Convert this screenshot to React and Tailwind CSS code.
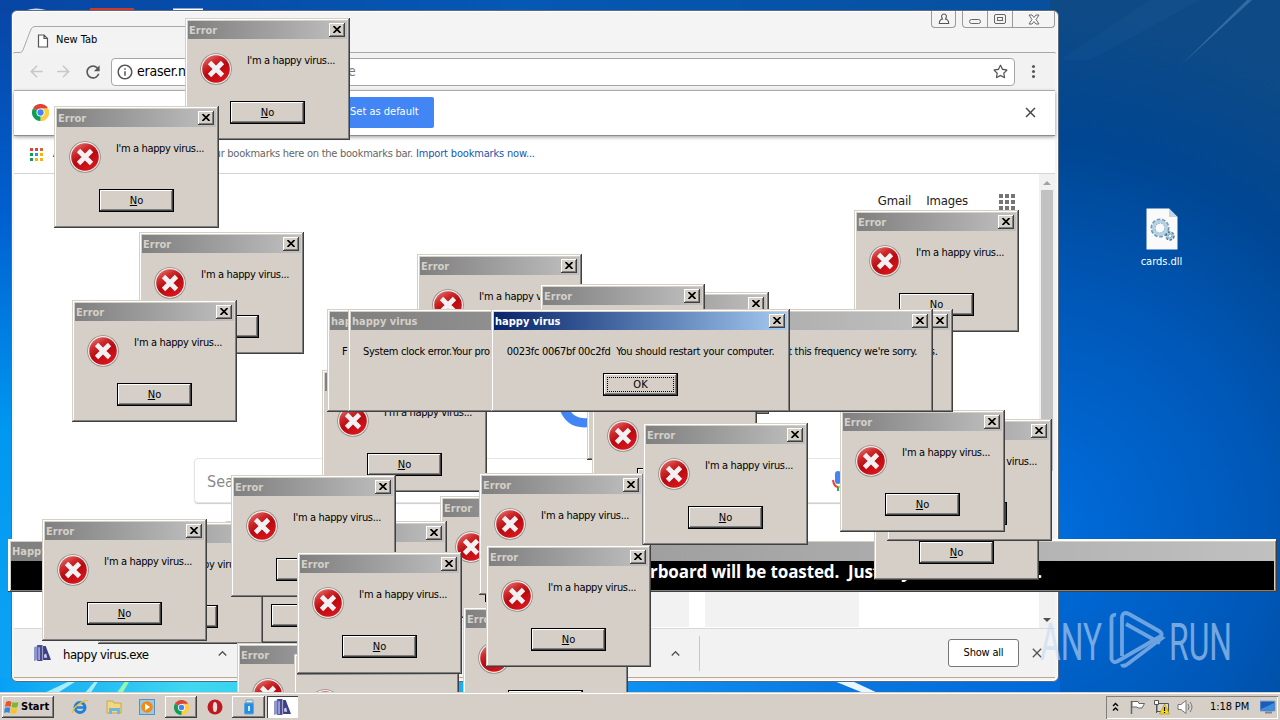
import { FaRegStar } from 'react-icons/fa'
import { MdArrowBack, MdArrowForward, MdClose, MdInfoOutline, MdRefresh, MdExpandLess } from 'react-icons/md'

// back to front; the letters are the texts left uncovered: t = title, m = message, b = button
const errors = [
	[854, 210, 'tmb'], [185, 18, 'tmb'], [54, 106, 'tmb'], [139, 232, 'tm'], [72, 300, 'tmb'],
	[604, 292, ''], [417, 254, 'tm'], [540, 284, 't'], [587, 338, ''], [592, 385, 'm'], [322, 370, 'mb'],
	[440, 496, 't'], [282, 521, ''], [226, 521, ''], [98, 522, 'm'], [237, 643, 't'], [294, 654, 'm'],
	[463, 607, 't'], [479, 473, 'tm'], [231, 475, 'tm'], [297, 552, 'tmb'], [486, 545, 'tmb'], [42, 519, 'tmb'],
	[643, 423, 'tmb'], [874, 458, 'b'], [887, 419, 'm'], [840, 410, 'tmb'],
]

const ErrorIcon = () => (
	<svg width="32" height="32" viewBox="0 0 32 32" className="shrink-0">
		<defs>
			<linearGradient id="err" x1="0" y1="0" x2="0.6" y2="1">
				<stop offset="0" stopColor="#e88a86" />
				<stop offset="0.35" stopColor="#cf2a2c" />
				<stop offset="0.6" stopColor="#b80a10" />
				<stop offset="1" stopColor="#d8161c" />
			</linearGradient>
		</defs>
		<circle cx="16" cy="16" r="15.8" fill="#8f8a86" />
		<circle cx="16" cy="16" r="15" fill="#f1efec" />
		<circle cx="16" cy="16" r="13.8" fill="url(#err)" />
		<path d="M9.500 9.500 22.500 22.500M22.500 9.500 9.500 22.500" stroke="#f1f1f3" strokeWidth="4.800" />
	</svg>
)

const CloseButton = () => (
	<div className="flex h-3.5 w-4 items-center justify-center bg-[#d4d0c8] shadow-[inset_-1px_-1px_#404040,inset_1px_1px_#fff,inset_-2px_-2px_#808080]">
		<svg width="8" height="7" viewBox="0 0 8 7" className="mr-px mb-px">
			<path d="M0.5 0 7.5 7M7.5 0 0.5 7" stroke="#000" strokeWidth="1.7" />
		</svg>
	</div>
)

const Window = ({ x, y, w, h, title, active, children }) => (
	<div
		className="absolute flex flex-col bg-[#d5cfc8] p-[3px] shadow-[inset_-1px_-1px_#404040,inset_1px_1px_#d4d0c8,inset_-2px_-2px_#808080,inset_2px_2px_#fff]"
		style={{ left: x, top: y, width: w, height: h }}
	>
		<div className={`flex h-[18px] shrink-0 items-center bg-linear-to-r pr-0.5 pl-px text-[11px] font-bold whitespace-nowrap ${active ? 'from-[#0a246a] to-[#a6caf0] text-white' : 'from-[#808080] to-[#c0c0c0] text-[#d4d0c8]'}`}>
			<span className="mt-0.5 mr-auto leading-4">{title}</span>
			<CloseButton />
		</div>
		{children}
	</div>
)

const DialogButton = ({ focused, children }) => (
	<div className="flex h-[23px] w-[75px] items-center justify-center border border-black bg-[#d5cfc8] text-[11px] shadow-[inset_-1px_-1px_#404040,inset_1px_1px_#fff,inset_-2px_-2px_#808080]">
		<div className={`flex h-[15px] w-[67px] items-center justify-center leading-[13px] ${focused ? 'border border-dotted border-black' : ''}`}>{children}</div>
	</div>
)

const ErrorDialog = ({ x, y, shown }) => (
	<Window x={x} y={y} w={165} h={122} title={shown.includes('t') && 'Error'}>
		<div className="flex h-[62px] gap-[15px] pt-3.5 pl-3">
			<ErrorIcon />
			{shown.includes('m') && <p className="mt-px text-[11px] leading-[14px] tracking-[-0.35px] whitespace-nowrap">I'm a happy virus...</p>}
		</div>
		<div className="pl-[42px]">
			<DialogButton>{shown.includes('b') && <span><u>N</u>o</span>}</DialogButton>
		</div>
	</Window>
)

const ChromeLogo = ({ size }) => (
	<svg width={size} height={size} viewBox="0 0 20 20" className="shrink-0">
		<path d="M10 10 1.3 5A10 10 0 0 1 18.7 5Z" fill="#db4437" />
		<path d="M10 10 18.7 5A10 10 0 0 1 10 20L10 10Z" fill="#ffcd40" />
		<path d="M10 10 10 20A10 10 0 0 1 1.3 5Z" fill="#0f9d58" />
		<path d="M10 5H18.7A10 10 0 0 1 10 20L14.3 12.5Z" fill="#ffcd40" />
		<circle cx="10" cy="10" r="4.8" fill="#fff" />
		<circle cx="10" cy="10" r="3.7" fill="#4285f4" />
	</svg>
)

const ExeIcon = ({ size }) => (
	<svg width={size} height={size} viewBox="0 0 16 16" className="shrink-0">
		<path d="M0 2 3 1V14L0 15Z" fill="#8f96cc" />
		<path d="M3 0H8V15H3Z" fill="#4a4a92" />
		<path d="M4 2H5.500V14H4Z" fill="#a5b0e0" />
		<path d="M8.500 1H11L16 14H8.500Z" fill="#3c3f86" />
		<path d="M9.500 9 11.500 8 12.500 12H9.500Z" fill="#c9cdee" />
	</svg>
)

const appColors = ['bg-[#db4437]', 'bg-[#db4437]', 'bg-[#db6437]', 'bg-[#0f9d58]', 'bg-[#4285f4]', 'bg-[#f4b400]', 'bg-[#0f9d58]', 'bg-[#f4b400]', 'bg-[#f4b400]']

const Wallpaper = () => (
	<svg width="1280" height="720" className="absolute inset-0">
		<defs>
			<linearGradient id="left" x1="0" y1="0" x2="0" y2="1">
				<stop offset="0" stopColor="#0845a4" />
				<stop offset="0.3" stopColor="#0060d0" />
				<stop offset="0.6" stopColor="#0098f0" />
				<stop offset="1" stopColor="#10a4f4" />
			</linearGradient>
			<linearGradient id="top" x1="0" y1="0" x2="1" y2="0">
				<stop offset="0" stopColor="#0845a4" />
				<stop offset="0.4" stopColor="#0558b4" />
				<stop offset="0.8" stopColor="#07509f" />
				<stop offset="1" stopColor="#104a85" />
			</linearGradient>
			<radialGradient id="right" gradientUnits="userSpaceOnUse" cx="1030" cy="530" r="520">
				<stop offset="0" stopColor="#006edf" />
				<stop offset="0.45" stopColor="#0058b8" />
				<stop offset="0.75" stopColor="#004692" />
				<stop offset="1" stopColor="#0e4a86" />
			</radialGradient>
			<linearGradient id="bottom" x1="0" y1="0" x2="1" y2="0">
				<stop offset="0" stopColor="#08a0f4" />
				<stop offset="0.18" stopColor="#40d8f0" />
				<stop offset="0.38" stopColor="#20c0f0" />
				<stop offset="0.5" stopColor="#109cf8" />
				<stop offset="0.8" stopColor="#0a78e0" />
				<stop offset="1" stopColor="#0068d8" />
			</linearGradient>
		</defs>
		<rect width="1280" height="720" fill="url(#left)" />
		<rect width="1280" height="14" fill="url(#top)" />
		<rect x="1050" width="230" height="720" fill="url(#right)" />
		<rect y="678" width="1060" height="42" fill="url(#bottom)" />
		<path d="M42 694 72 680H78L56 694ZM84 694 96 680H99L90 694Z" fill="#a8ecff" />
		<path d="M116 694 126 680H130L122 694Z" fill="#98f4b0" />
		<path d="M834 681H852L880 694H866Z" fill="#eaf6ff" />
		<path d="M1180 66 1247 0H1252Z" fill="#4b80b4" opacity=".6" />
		<path d="M1060 60 1150 0H1200L1090 60Z" fill="#2b68ac" opacity=".12" />
		<path d="M27 10Q36 7 46 10Z" fill="#d8dce8" />
		<path d="M90 8H134V11H90Z" fill="#d03828" />
		<path d="M173 8.500H203V10.500H173Z" fill="#fff" />
	</svg>
)

const Caption = () => (
	<div className="flex h-[17px] justify-end gap-1.5">
		<div className="flex h-[17px] w-[25px] items-center justify-center rounded-b border border-t-0 border-[#9a9a9a]">
			<svg width="12" height="12" viewBox="0 0 12 12" fill="none" stroke="#555" strokeWidth="1.1">
				<path d="M4.500 6C2.500 3 4 1 6 1S9.500 3 7.500 6C10 6.500 10.700 8 10.700 10.500H1.300C1.300 8 2 6.500 4.500 6Z" />
			</svg>
		</div>
		<div className="flex h-[17px] w-[93px] rounded-b border border-t-0 border-[#9a9a9a]">
			<div className="flex w-[25px] items-center justify-center border-r border-[#9a9a9a] pt-1">
				<div className="h-[5px] w-3 rounded-sm border border-[#666]" />
			</div>
			<div className="flex w-[25px] items-center justify-center border-r border-[#9a9a9a]">
				<div className="flex h-2.5 w-3 items-center justify-center rounded-xs border border-[#666]">
					<div className="h-1 w-1.5 border border-[#666]" />
				</div>
			</div>
			<div className="flex grow items-center justify-center">
				<svg width="12" height="11" viewBox="0 0 12 11" fill="#fff" stroke="#666">
					<path d="M1 1H4L6 3.500 8 1H11L8 5.500 11 10H8L6 7.500 4 10H1L4 5.500Z" />
				</svg>
			</div>
		</div>
	</div>
)

const Browser = () => (
	<div className="absolute top-2.5 left-[11px] isolate flex h-[672px] w-[1048px] flex-col overflow-hidden rounded-md border border-[#5a6a80] bg-[#f4f4f4] pr-[3px] pb-[3px] pl-0.5 text-[11px] shadow-[inset_1px_1px_#fff,inset_-1px_-1px_#fff]">
		<Caption />
		<div className="flex h-[25px]">
			<svg width="1041" height="26" className="shrink-0" overflow="visible">
				<path d="M0 26V24.500H6Q8 24.500 9 22L17 1Q18.500 -1.500 21 -1.500H172V24.500H1041V26Z" fill="#f3f3f3" stroke="#a8a8a8" />
			</svg>
			<div className="-ml-[1018px] flex items-center gap-[7px]">
				<svg width="12" height="14" viewBox="0 0 12 14" fill="#fff" stroke="#555" strokeWidth="1.2">
					<path d="M1.500 1H7L10.500 4.500V13H1.500ZM7 1V4.500H10.500" />
				</svg>
				<span>New Tab</span>
			</div>
		</div>
		<div className="flex h-[38px] shrink-0 items-center border-b border-[#b0b0b0] bg-[#f2f2f2] pl-[13px]">
			<MdArrowBack size={19} color="#c8c8c8" />
			<MdArrowForward size={19} color="#c8c8c8" className="ml-2" />
			<MdRefresh size={20} color="#5a5a5a" className="ml-2.5" />
			<div className="ml-2 flex h-7 w-[904px] items-center rounded-sm border border-[#a6a6a6] bg-white px-1 text-[14px]">
				<MdInfoOutline size={18} color="#555" />
				<span className="ml-[3px] w-[215px] tracking-[-0.25px]">eraser.net/software</span>
				<span className="-ml-1 text-[#777]">e</span>
				<FaRegStar size={15} color="#555" className="mr-0.5 ml-auto" />
			</div>
			<div className="ml-[17px] flex flex-col gap-0.5">
				<i className="size-[3px] rounded-full bg-[#555]" />
				<i className="size-[3px] rounded-full bg-[#555]" />
				<i className="size-[3px] rounded-full bg-[#555]" />
			</div>
		</div>
		<div className="z-10 flex h-[45px] shrink-0 items-center border-b border-[#8c8c8c] bg-white pr-4 pb-px pl-[18px] shadow-[0_1px_4px_#999]">
			<ChromeLogo size={17} />
			<div className="ml-[286px] flex h-[31px] w-[99px] items-center rounded-xs bg-[#4285f4] pl-[15px] whitespace-nowrap text-white">Set as default</div>
			<MdClose size={17} color="#444" className="ml-auto" />
		</div>
		<div className="flex h-[38px] shrink-0 items-center border-b border-[#d4d4d4] bg-white pl-4 text-[#666]">
			<div className="grid grid-cols-3 gap-[2px]">
				{appColors.map((color, i) => <i key={i} className={`size-[3px] ${color}`} />)}
			</div>
			<span className="ml-2.5 w-6 text-black">Apps</span>
			<div className="flex w-[336px] justify-end tracking-[-0.25px] whitespace-nowrap">place your bookmarks here on the bookmarks bar.</div>
			<span className="ml-[3px] tracking-[-0.17px] whitespace-nowrap text-[#1a56b0]">Import bookmarks now...</span>
		</div>
		<div className="flex h-[454px] shrink-0 bg-white">
			<div className="flex w-[1025px] shrink-0 flex-col">
				<div className="flex h-9 items-end justify-end gap-[15px] pr-6 text-[13px] tracking-[-0.15px] text-[#222]">
					<span>Gmail</span>
					<span>Images</span>
					<div className="ml-4 grid grid-cols-3 gap-0.5">
						{appColors.map((_, i) => <i key={i} className="size-1 bg-[#757575]" />)}
					</div>
				</div>
				<svg width="80" height="70" className="mt-[164px] ml-[537px] shrink-0" viewBox="0 0 80 70">
					<path d="M13 34Q20 54 46 47" fill="none" stroke="#4285f4" strokeWidth="9" />
				</svg>
				<div className="mt-[14px] ml-[180px] flex h-[45px] w-[665px] shrink-0 items-center justify-between rounded-sm border border-[#e4e4e4] px-3 text-base text-[#8a8a8a] shadow-[0_1px_1px_#ccc]">
					<span className="pt-0.5">Search Google</span>
					<svg width="16" height="24" viewBox="0 0 16 24">
						<rect x="5" y="2" width="6" height="13" rx="3" fill="#4285f4" />
						<path d="M3 11Q4 18 8 18" fill="none" stroke="#ea4335" strokeWidth="2" />
						<path d="M8 18Q14 18 15 11" fill="none" stroke="#fbbc05" strokeWidth="2" />
						<path d="M8 18V22" stroke="#34a853" strokeWidth="2" />
					</svg>
				</div>
				<div className="mt-[60px] ml-[181px] flex h-16 gap-4 overflow-hidden">
					{[1, 2, 3, 4].map((n) => <div key={n} className="w-[154px] bg-[#f2f2f2]" />)}
				</div>
			</div>
			<div className="flex w-[17px] flex-col items-center bg-[#f1f1f1] pt-[7px]">
				<i className="border-x-4 border-b-4 border-x-transparent border-b-[#a3a3a3]" />
				<div className="mt-[5px] h-[281px] w-3 bg-[#c1c1c1]" />
				<i className="mt-auto mb-1.5 border-x-4 border-t-4 border-x-transparent border-t-[#505050]" />
			</div>
		</div>
		<div className="flex h-[50px] shrink-0 items-center border-y border-t-[#d8d8d8] border-b-[#c0a890] bg-[#f2f2f2]">
			<div className="flex h-full w-[217px] items-center pl-5 text-[13px]">
				<ExeIcon size={17} />
				<span className="ml-3 pt-[3px] tracking-[-0.5px]">happy virus.exe</span>
				<MdExpandLess size={17} color="#555" className="ml-auto" />
			</div>
			<div className="ml-auto flex h-[35px] w-[33px] items-center border-r border-[#c8c8c8]">
				<MdExpandLess size={17} color="#555" />
			</div>
			<div className="ml-[248px] flex h-7 w-[71px] items-center justify-center rounded-[3px] border border-[#777] bg-white tracking-[-0.2px]">Show all</div>
			<MdClose size={16} color="#555" className="mr-2.5 ml-2.5" />
		</div>
	</div>
)

const Taskbar = () => (
	<div className="absolute inset-x-0 bottom-0 flex h-7 items-center border-t border-[#d4d0c8] bg-[#d5cfc8] pt-px pr-0.5 pl-0.5 text-[11px] shadow-[inset_0_1px_#fff]">
		<div className="flex h-[22px] w-[52px] items-center gap-0.5 pl-0.5 font-bold shadow-[inset_-1px_-1px_#404040,inset_1px_1px_#fff,inset_-2px_-2px_#808080]">
			<svg width="15" height="15" viewBox="0 0 15 15" className="shrink-0">
				<path d="M2 2Q5 0 7.500 2L6.500 7Q4 5.500 1 7Z" fill="#e8542c" />
				<path d="M8.500 2Q11 3.500 14.500 2L13.500 7Q10.500 8.500 7.500 7Z" fill="#7cb82c" />
				<path d="M0.800 8Q4 6.500 6.300 8L5.500 13Q3 11.500 0 13Z" fill="#3c84d8" />
				<path d="M7.300 8Q10 9.500 13.300 8L12.300 13Q9.500 14.500 6.300 13Z" fill="#f8c420" />
			</svg>
			Start
		</div>
		<div className="flex w-[111px] items-center justify-between pr-2.5 pl-[18px]">
			<svg width="17" height="16" viewBox="0 0 17 16" fill="none">
				<circle cx="8" cy="8.500" r="5" stroke="#1e80d8" strokeWidth="3" />
				<path d="M4 8.500H13" stroke="#1e80d8" strokeWidth="2.500" />
				<path d="M1 14Q0 10 7 5 14 0 16 2" stroke="#f0c030" strokeWidth="1.500" />
			</svg>
			<svg width="17" height="16" viewBox="0 0 17 16">
				<path d="M1 2H7L8 4H15V14H1Z" fill="#f0d880" stroke="#c8a850" />
				<path d="M3 9H14V15H11V12H6V15H3Z" fill="#6cb8e4" />
			</svg>
			<svg width="16" height="16" viewBox="0 0 16 16">
				<rect x="0.500" y="0.500" width="15" height="15" fill="#9cc8ec" stroke="#5890c0" />
				<circle cx="8" cy="8" r="5.800" fill="#f08c14" />
				<path d="M6 4.500 11 8 6 11.500Z" fill="#fff" />
			</svg>
		</div>
		<div className="flex h-[22px] w-8 items-center justify-center shadow-[inset_-1px_-1px_#404040,inset_1px_1px_#fff,inset_-2px_-2px_#808080]">
			<ChromeLogo size={15} />
		</div>
		<div className="flex w-[35px] justify-center">
			<svg width="16" height="16" viewBox="0 0 16 16">
				<circle cx="8" cy="8" r="7.500" fill="#c01820" />
				<ellipse cx="8" cy="8" rx="2.200" ry="5" fill="#e8dcd8" />
			</svg>
		</div>
		<div className="flex h-[22px] w-[33px] items-center justify-center shadow-[inset_-1px_-1px_#404040,inset_1px_1px_#fff,inset_-2px_-2px_#808080]">
			<svg width="12" height="16" viewBox="0 0 12 16">
				<path d="M3 1H10V4H3Z" fill="#e8f0f4" stroke="#8898a8" />
				<rect x="1.500" y="4" width="9" height="11" rx="1" fill="#2a8ce0" stroke="#58a8e8" />
				<path d="M6 7V12" stroke="#c8f0ff" strokeWidth="2" />
			</svg>
		</div>
		<div className="ml-0.5 flex h-[22px] w-[31px] items-center justify-center bg-white shadow-[inset_1px_1px_#404040,inset_-1px_-1px_#fff]">
			<ExeIcon size={17} />
		</div>
		<div className="ml-auto flex h-[23px] w-[172px] items-center pl-1.5 shadow-[inset_1px_1px_#808080,inset_-1px_-1px_#fff]">
			<svg width="7" height="10" viewBox="0 0 7 10" fill="none" stroke="#000" strokeWidth="1.400">
				<path d="M1 4 3.500 1.500 6 4M1 8.500 3.500 6 6 8.500" />
			</svg>
			<svg width="17" height="16" viewBox="0 0 17 16" className="ml-2.5">
				<path d="M2.500 2V15" stroke="#666" strokeWidth="1.500" />
				<path d="M3 2.500H9L10 4.500H15.500L13 9H9L8 8H3Z" fill="#fff" stroke="#666" />
			</svg>
			<svg width="17" height="16" viewBox="0 0 17 16" className="ml-[7px]">
				<path d="M4 4.500H15.500V12.500H4Z" fill="#d8d8d8" stroke="#555" />
				<path d="M1.500 1.500H5.500V5.500H1.500ZM3.500 5.500V14" fill="#fff" stroke="#555" />
				<path d="M11.500 5 16.500 15H6.500Z" fill="#f8d818" stroke="#a89010" strokeWidth=".6" />
				<path d="M11.500 8V12M11.500 13V14" stroke="#000" strokeWidth="1.200" />
			</svg>
			<svg width="18" height="16" viewBox="0 0 18 16" className="ml-[7px]" stroke="#777">
				<path d="M1 5.500H4L9 1.500V14.500L4 10.500H1Z" fill="#fff" />
				<path d="M11 5Q13 8 11 11M13 3Q17 8 13 13" fill="none" />
			</svg>
			<span className="ml-[15px] tracking-[-0.1px] whitespace-nowrap">1:18 PM</span>
			<svg width="16" height="14" viewBox="0 0 16 14" className="mr-0.5 ml-auto">
				<path d="M0 1H15V11H0Z" fill="#1c5cb8" stroke="#88a8d0" />
				<path d="M1 9 14 3V10H1Z" fill="#3c8ce0" />
				<path d="M5 12.500H12" stroke="#789" strokeWidth="2" />
			</svg>
		</div>
	</div>
)

const Watermark = () => (
	<svg width="210" height="80" className="absolute top-[606px] left-[1038px] opacity-60" fill="none" stroke="#b4d0f2" strokeWidth="3.800">
		<g fill="#c4daf5" stroke="none" fontFamily="Roboto, sans-serif" fontSize="52">
			<text x="2" y="53.500" textLength="62" lengthAdjust="spacingAndGlyphs">ANY</text>
			<text x="131" y="53.500" textLength="63" lengthAdjust="spacingAndGlyphs">RUN</text>
		</g>
		<path d="M78 9Q73 8 73.500 14V53Q75 58 80 55L123 30" />
		<path d="M84 50V11Q85 5 91 8L121 25Q126 28 122 31" />
		<path d="M88 18 122 37M122 31 124 32 91 57Q85 62 84 58" />
	</svg>
)

const DesktopFile = () => (
	<div className="absolute top-[208px] left-[1124px] flex w-[75px] flex-col items-center gap-1 text-[11px] text-white">
		<svg width="32" height="42" viewBox="0 0 32 42">
			<path d="M0.500 0.500H23L31.500 9V41.500H0.500Z" fill="#fafafa" />
			<path d="M23 0.500V9H31.500Z" fill="#c4d4e0" />
			<circle cx="14" cy="20" r="7" fill="none" stroke="#6f9ab6" strokeWidth="5" strokeDasharray="3 1.300" />
			<circle cx="14" cy="20" r="6.500" fill="none" stroke="#b4d2e4" strokeWidth="3" />
			<circle cx="24" cy="28" r="3" fill="none" stroke="#4c7694" strokeWidth="3.500" strokeDasharray="2 1" />
			<circle cx="24" cy="28" r="2.500" fill="none" stroke="#a0c4dc" strokeWidth="1.500" />
		</svg>
		<span>cards.dll</span>
	</div>
)

export default function App() {
	return (
		<div className="relative h-[720px] w-[1280px] overflow-hidden bg-[#0058b8] font-['DejaVu_Sans_Condensed','DejaVu_Sans',sans-serif] text-black">
			<Wallpaper />
			<DesktopFile />
			<Browser />

			<div className="absolute top-[539px] left-2 flex h-[53px] w-[1269px] flex-col bg-[#d4d0c8] p-[3px] pb-0.5 shadow-[inset_-1px_-1px_#404040,inset_2px_2px_#fff,inset_-2px_-2px_#808080]">
				<div className="h-[19px] bg-linear-to-r from-[#808080] to-[#c0c0c0] pl-px text-[11px] leading-5 font-bold text-[#d4d0c8]">Happy virus</div>
				<div className="flex grow items-center justify-end bg-black pr-[232px] pb-2 font-['Open_Sans',sans-serif] text-[17px] leading-5 font-bold whitespace-pre text-white">
					<span className="tracking-[-0.1px]">Your motherboard will be toasted.  Just</span>
					<span className="w-[157px] pl-1.5">try</span>
					<span>.</span>
				</div>
			</div>

			{errors.map(([x, y, shown]) => <ErrorDialog key={`${x}-${y}`} x={x} y={y} shown={shown} />)}

			<Window x={327} y={309} w={626} h={103} title="hap">
				<div className="flex justify-between px-3 pt-[15px] text-[11px] leading-[14px]"><span>F</span><span>s.</span></div>
			</Window>
			<Window x={348} y={309} w={585} h={103} title="happy virus">
				<div className="flex justify-between px-3 pt-[15px] pr-[13px] text-[11px] leading-[14px] tracking-[-0.3px]">
					<span>System clock error.Your pro</span>
					<span>t this frequency we're sorry.</span>
				</div>
			</Window>
			<Window x={491} y={309} w={299} h={103} title="happy virus" active>
				<div className="flex flex-col items-center gap-3.5 pt-[15px] text-[11px]">
					<p className="leading-[14px] tracking-[-0.28px] whitespace-pre">0023fc 0067bf 00c2fd  You should restart your computer.</p>
					<DialogButton focused>OK</DialogButton>
				</div>
			</Window>

			<Watermark />
			<Taskbar />
		</div>
	)
}
